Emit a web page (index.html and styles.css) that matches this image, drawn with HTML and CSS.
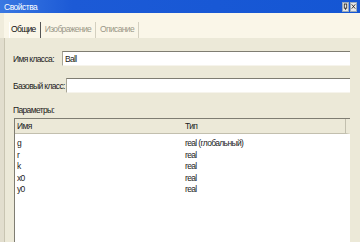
FILE: index.html
```html
<!DOCTYPE html>
<html lang="ru">
<head>
  <meta charset="UTF-8" />
  <title>Свойства</title>
  <link rel="stylesheet" href="styles.css">
</head>
<body>

  <div class="window">
    <div class="titlebar">
      <span class="title">Свойства</span>
      <div class="buttons">
        <span class="tbtn">
          <svg width="6" height="9" viewBox="0 0 6 9"><rect x="1.5" y="1.5" width="3" height="5" fill="none" stroke="#222" stroke-width="1"/><line x1="3" y1="6.5" x2="3" y2="8.5" stroke="#222"/></svg>
        </span>
        <span class="tbtn">
          <svg width="7" height="9" viewBox="0 0 7 9"><path d="M1 1.5 L6 7.5 M6 1.5 L1 7.5" stroke="#222" stroke-width="1.2"/></svg>
        </span>
      </div>
    </div>

    <div class="tabs">
      <div class="tab active">Общие</div>
      <div class="tab">Изображение</div>
      <div class="tab">Описание</div>
    </div>

    <div class="panel">
      <div class="field">
        <label>Имя класса:</label>
        <div class="input">Ball</div>
      </div>
      <div class="field">
        <label>Базовый класс:</label>
        <div class="input"></div>
      </div>

      <div class="caption">Параметры:</div>

      <div class="list">
        <div class="list-head">
          <div class="col-name">Имя</div>
          <div class="col-type">Тип</div>
        </div>
        <div class="list-row"><div class="col-name">g</div><div class="col-type">real (глобальный)</div></div>
        <div class="list-row"><div class="col-name">r</div><div class="col-type">real</div></div>
        <div class="list-row"><div class="col-name">k</div><div class="col-type">real</div></div>
        <div class="list-row"><div class="col-name">x0</div><div class="col-type">real</div></div>
        <div class="list-row"><div class="col-name">y0</div><div class="col-type">real</div></div>
      </div>
    </div>
  </div>

</body>
</html>
```

FILE: styles.css
```css
body {
  margin: 0;
  font-family: "Liberation Sans", Arial, sans-serif;
  font-size: 8.5px;
  letter-spacing: -0.65px;
  color: #222;
  background-color: #ece9d8;
}

.window {
  width: 360px;
  height: 242px;
  display: flex;
  flex-direction: column;
  overflow: hidden;
}

.titlebar {
  height: 13px;
  background: linear-gradient(to right, #3a78e2, #1c5ad6 20%, #1456d4);
  color: white;
  display: flex;
  align-items: center;
  justify-content: space-between;
  padding: 0 3px 0 4px;
  flex-shrink: 0;
}

.title {
  font-size: 8.5px;
  letter-spacing: -0.5px;
}

.buttons {
  display: flex;
  gap: 1px;
}

.tbtn {
  width: 7px;
  height: 10px;
  background-color: #e8e8e8;
  border: 1px solid #9ab;
  box-sizing: border-box;
  display: flex;
  align-items: center;
  justify-content: center;
}

.tabs {
  height: 25px;
  background-color: #faf6e8;
  display: flex;
  align-items: flex-end;
  padding-left: 5px;
  border-left: 4px solid #f0ecdc;
  flex-shrink: 0;
}

.tab {
  height: 16px;
  line-height: 14px;
  padding: 0 4px 0 3px;
  margin-right: 1px;
  color: #9a9888;
  border-right: 1px solid #d4d0c0;
}

.tab.active {
  color: #111;
  border-left: 1px solid #fff;
  border-right: 1px solid #555;
  padding-left: 1px;
}

.panel {
  flex: 1;
  padding: 13px 10px 0 9px;
  border-left: 4px solid #e2dece;
  box-shadow: inset 1px 0 #c9c5b2;
  display: flex;
  flex-direction: column;
}

.field {
  display: flex;
  align-items: center;
  margin-bottom: 12px;
}

.field label {
  min-width: 48px;
  margin-right: 1px;
  flex-shrink: 0;
  white-space: nowrap;
}

.input {
  flex: 1;
  height: 15px;
  box-sizing: border-box;
  background-color: white;
  border-top: 1px solid #7f7d72;
  border-left: 1px solid #a8a596;
  border-bottom: 1px solid #f6f4ec;
  padding: 2px 2px 0;
  line-height: 10px;
}

.caption {
  margin-bottom: 3px;
}

.list {
  flex: 1;
  background-color: white;
  border-top: 1px solid #7f7d72;
  border-left: 1px solid #7f7d72;
  margin-left: 1px;
}

.list-head {
  display: flex;
  height: 14px;
  line-height: 14px;
  background-color: #ece9d8;
  border-bottom: 1px solid #c2bfae;
  border-right: 4px solid #ece9d8;
  box-shadow: inset -1px 0 #c2bfae;
  margin-bottom: 4px;
}

.list-row {
  display: flex;
  height: 11.5px;
  line-height: 11.5px;
}

.col-name {
  width: 168px;
  padding-left: 2px;
}

.col-type {
  flex: 1;
}
```
